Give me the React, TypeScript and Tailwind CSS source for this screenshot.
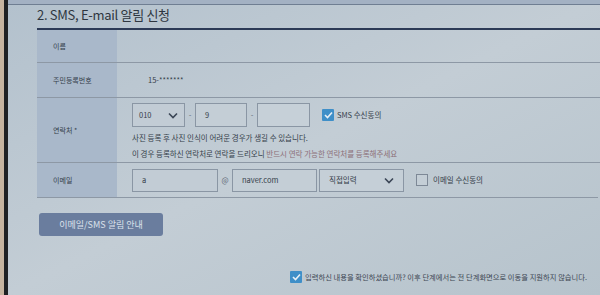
import React from "react";

const font = { fontFamily: '"Noto Sans CJK KR", "Noto Sans", sans-serif' };

const Chevron = () => (
  <svg width="10" height="7" viewBox="0 0 10 7" fill="none">
    <path d="M1 1.5 L5 5.5 L9 1.5" stroke="#3b4656" strokeWidth="1.6" />
  </svg>
);

const Check = ({ checked }: { checked: boolean }) =>
  checked ? (
    <span className="shrink-0 w-[12px] h-[12px] bg-[#3f8fc8] rounded-[1px] flex items-center justify-center">
      <svg width="9" height="8" viewBox="0 0 9 8" fill="none">
        <path d="M1 4 L3.5 6.5 L8 1.5" stroke="#e8f0f6" strokeWidth="1.6" />
      </svg>
    </span>
  ) : (
    <span className="shrink-0 w-[12px] h-[12px] border border-[#7d8896] bg-[#c4ced6]" />
  );

const App: React.FC = () => {
  return (
    <div className="w-[600px] h-[295px] flex overflow-hidden text-[#353e4a]" style={font}>
      <div className="shrink-0 w-[4px] bg-[#c6b4a0]" />
      <div className="shrink-0 w-[4px] bg-[#1f2124]" />
      <div className="flex-1 min-w-0 flex flex-col bg-gradient-to-br from-[#b3c1cd] via-[#c3cdd5] to-[#b6c3cc]">
        <div className="h-[5px] bg-[#a3b1c3] border-b border-[#6f7e92]" />
        <div className="pl-[29px] flex flex-col">
          <div className="h-[23px] pt-[2px] text-[13px] tracking-[-0.3px] text-[#2e3640] leading-[16px]">
            2. SMS, E-mail 알림 신청
          </div>

          <div className="border-t-2 border-[#2c3a56] text-[7.5px]">
            {/* 이름 */}
            <div className="grid grid-cols-[80px_1fr] h-[33px] border-b border-[#8d98a5]">
              <div className="bg-[#a9b8ca] flex items-center pl-[16px] text-[7px]">이름</div>
              <div />
            </div>
            {/* 주민등록번호 */}
            <div className="grid grid-cols-[80px_1fr] h-[35px] border-b border-[#8d98a5]">
              <div className="bg-[#a9b8ca] flex items-center pl-[16px] text-[7px]">주민등록번호</div>
              <div className="flex items-center pl-[31px]">15-*******</div>
            </div>
            {/* 연락처 */}
            <div className="grid grid-cols-[80px_1fr] h-[65px] border-b border-[#8d98a5]">
              <div className="bg-[#a9b8ca] flex items-center pl-[16px] text-[7px]">연락처 *</div>
              <div className="pl-[15px] pt-[5px] flex flex-col">
                <div className="flex items-center h-[24px]">
                  <div className="w-[53px] h-[24px] border border-[#8a96a4] bg-[#c2ccd5] flex items-center justify-between px-[6px]">
                    <span>010</span>
                    <Chevron />
                  </div>
                  <span className="w-[10px] text-center text-[#5d6876]">-</span>
                  <div className="w-[52px] h-[24px] border border-[#8a96a4] bg-[#c4ced6] flex items-center px-[9px]">9</div>
                  <span className="w-[10px] text-center text-[#5d6876]">-</span>
                  <div className="w-[53px] h-[24px] border border-[#8a96a4] bg-[#c6d0d8]" />
                  <div className="ml-[12px] flex items-center gap-[3px]">
                    <Check checked />
                    <span>SMS 수신동의</span>
                  </div>
                </div>
                <div className="mt-[3px] leading-[16px]">사진 등록 후 사진 인식이 어려운 경우가 생길 수 있습니다.</div>
                <div className="leading-[16px]">
                  이 경우 등록하신 연락처로 연락을 드리오니{" "}
                  <span className="text-[#8c6f78]">반드시 연락 가능한 연락처를 등록해주세요</span>
                </div>
              </div>
            </div>
            {/* 이메일 */}
            <div className="grid grid-cols-[80px_1fr] h-[34px]">
              <div className="bg-[#a9b8ca] flex items-center pl-[16px] text-[7px]">이메일</div>
              <div className="pl-[15px] flex items-center">
                <div className="w-[86px] h-[23px] border border-[#8a96a4] bg-[#c2ccd5] flex items-center px-[9px]">a</div>
                <span className="w-[14px] text-center text-[#5d6876]">@</span>
                <div className="w-[85px] h-[23px] border border-[#8a96a4] bg-[#c4ced6] flex items-center px-[9px]">naver.com</div>
                <div className="ml-[2px] w-[85px] h-[23px] border border-[#8a96a4] bg-[#c5cfd7] flex items-center justify-between px-[9px]">
                  <span>직접입력</span>
                  <Chevron />
                </div>
                <div className="ml-[12px] flex items-center gap-[5px]">
                  <Check checked={false} />
                  <span>이메일 수신동의</span>
                </div>
              </div>
            </div>
          </div>
          <div className="mr-[2px] border-t border-[#8d98a5]" />

          <div className="mt-[15px] ml-[2px] w-[124px] h-[23px] rounded-[3px] bg-[#6a7d9e] text-[#dbe2ec] text-[9px] flex items-center justify-center">
            이메일/SMS 알림 안내
          </div>

          <div className="mt-[35px] ml-[253px] flex items-center gap-[3px] text-[7.3px] text-[#3d4653] whitespace-nowrap">
            <Check checked />
            <span>입력하신 내용을 확인하셨습니까? 이후 단계에서는 전 단계화면으로 이동을 지원하지 않습니다.</span>
          </div>
        </div>
      </div>
    </div>
  );
};

export default App;
